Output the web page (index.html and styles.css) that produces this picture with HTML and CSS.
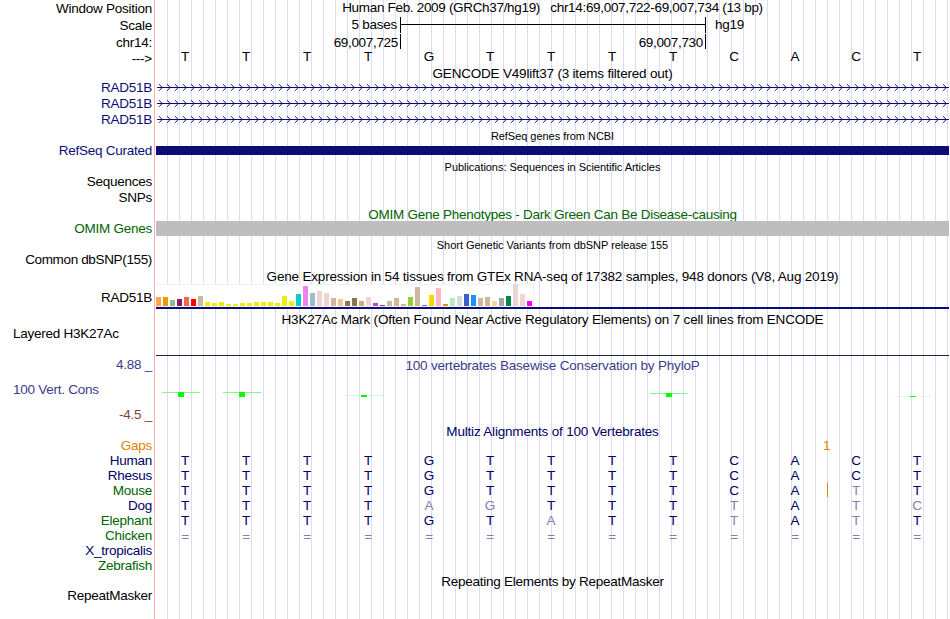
FILE: index.html
```html
<!DOCTYPE html>
<html lang="en">
<head>
    <meta charset="UTF-8">
    <meta name="viewport" content="width=device-width, initial-scale=1.0">
    <title>Genome Browser - RAD51B</title>
    <link rel="stylesheet" href="styles.css">
</head>
<body>
    <div class="browser">
        <section class="track ruler">
            <div class="labels">
                <div>Window Position</div>
                <div>Scale</div>
                <div>chr14:</div>
                <div class="strand">---&gt;</div>
            </div>
            <div class="data">
                <h2 class="t-position">Human Feb. 2009 (GRCh37/hg19) &nbsp; chr14:69,007,722-69,007,734 (13 bp)</h2>
                <div class="scale">
                    <span class="scale-size">5 bases</span>
                    <span class="scale-bar"></span>
                    <span class="scale-db">hg19</span>
                </div>
                <div class="ticks">
                    <span class="tick first">69,007,725</span>
                    <span class="tick">69,007,730</span>
                </div>
                <div class="bases" data-seq="TTTTGTTTTCACT"></div>
            </div>
        </section>

        <section class="track gencode">
            <div class="labels blue">
                <div>RAD51B</div>
                <div>RAD51B</div>
                <div>RAD51B</div>
            </div>
            <div class="data">
                <h2 class="wide">GENCODE V49lift37 (3 items filtered out)</h2>
                <svg class="introns" width="793" height="48">
                    <defs>
                        <pattern id="arrows" x="2" y="0" width="8" height="16" patternUnits="userSpaceOnUse">
                            <path d="M1 4.2 L4.3 7.5 L1 10.8" />
                        </pattern>
                    </defs>
                    <rect x="1" y="7" width="792" height="1" />
                    <rect x="1" y="23" width="792" height="1" />
                    <rect x="1" y="39" width="792" height="1" />
                    <rect x="1" y="0" width="792" height="48" fill="url(#arrows)" />
                </svg>
            </div>
        </section>

        <section class="track refseq">
            <div class="labels blue">
                <div>RefSeq Curated</div>
            </div>
            <div class="data">
                <h2 class="small">RefSeq genes from NCBI</h2>
                <div class="gene"></div>
            </div>
        </section>

        <section class="track pubs">
            <div class="labels">
                <div>Sequences</div>
                <div>SNPs</div>
            </div>
            <div class="data">
                <h2 class="small">Publications: Sequences in Scientific Articles</h2>
            </div>
        </section>

        <section class="track omim">
            <div class="labels">
                <div>OMIM Genes</div>
            </div>
            <div class="data">
                <h2>OMIM Gene Phenotypes - Dark Green Can Be Disease-causing</h2>
                <div class="gene"></div>
            </div>
        </section>

        <section class="track dbsnp">
            <div class="labels">
                <div>Common dbSNP(155)</div>
            </div>
            <div class="data">
                <h2 class="small">Short Genetic Variants from dbSNP release 155</h2>
            </div>
        </section>

        <section class="track gtex">
            <div class="labels">
                <div>RAD51B</div>
            </div>
            <div class="data">
                <h2 class="wide">Gene Expression in 54 tissues from GTEx RNA-seq of 17382 samples, 948 donors (V8, Aug 2019)</h2>
                <div class="chart" id="chart"></div>
                <div class="gene"></div>
            </div>
        </section>

        <section class="track h3k">
            <div class="labels">
                <div>Layered H3K27Ac</div>
            </div>
            <div class="data">
                <h2 class="wide">H3K27Ac Mark (Often Found Near Active Regulatory Elements) on 7 cell lines from ENCODE</h2>
                <div class="baseline"></div>
            </div>
        </section>

        <section class="track phylop">
            <div class="labels">
                <div class="max">4.88 _</div>
                <div class="name">100 Vert. Cons</div>
                <div class="min">-4.5 _</div>
            </div>
            <div class="data">
                <h2 class="wide">100 vertebrates Basewise Conservation by PhyloP</h2>
                <svg class="cons" width="793" height="10">
                    <g fill="#82f882">
                        <rect x="6" y="1" width="38" height="1" />
                        <rect x="67" y="1" width="38" height="1" />
                        <rect x="494" y="2" width="38" height="1" />
                    </g>
                    <g fill="#d0fad0">
                        <rect x="189" y="4" width="38" height="1" />
                        <rect x="738" y="5" width="38" height="1" opacity="0.6" />
                    </g>
                    <g fill="#00ff00">
                        <rect x="22" y="1" width="6" height="5" />
                        <rect x="83" y="1" width="6" height="5" />
                        <rect x="205" y="4" width="6" height="2" />
                        <rect x="510" y="2" width="6" height="4" />
                        <rect x="754" y="5" width="6" height="1" />
                    </g>
                </svg>
            </div>
        </section>

        <section class="track multiz">
            <div class="labels">
                <div class="gaps">Gaps</div>
                <div class="navy">Human</div>
                <div class="navy">Rhesus</div>
                <div class="green">Mouse</div>
                <div class="navy">Dog</div>
                <div class="green">Elephant</div>
                <div class="green">Chicken</div>
                <div class="navy">X_tropicalis</div>
                <div class="green">Zebrafish</div>
            </div>
            <div class="data">
                <h2 class="wide">Multiz Alignments of 100 Vertebrates</h2>
                <div class="gap-row">1</div>
                <!-- lower case = differs from human -->
                <div class="bases" data-seq="TTTTGTTTTCACT"></div>
                <div class="bases" data-seq="TTTTGTTTTCACT"></div>
                <div class="bases insert" data-seq="TTTTGTTTTCAtT"></div>
                <div class="bases" data-seq="TTTTagTTTtAtc"></div>
                <div class="bases" data-seq="TTTTGTaTTtAtT"></div>
                <div class="bases unaligned" data-seq="============="></div>
            </div>
        </section>

        <section class="track rmsk">
            <div class="labels">
                <div>RepeatMasker</div>
            </div>
            <div class="data">
                <h2>Repeating Elements by RepeatMasker</h2>
            </div>
        </section>
    </div>

    <script src="script.js"></script>
</body>
</html>
```
FILE: styles.css
```css
body {
    margin: 0;
    background-color: #fff;
    color: #000;
    font-family: "Liberation Sans", Arial, sans-serif;
    font-size: 13.5px;
    line-height: 15px;
    letter-spacing: -0.25px;
}

.browser {
    width: 949px;
    height: 619px;
    overflow: hidden;
    /* red edge of the label column, then a guide every 12px */
    background:
        linear-gradient(#ffb0b0, #ffb0b0) 154px 0 / 1px 100% no-repeat,
        repeating-linear-gradient(90deg, #dcdcf8 0, #dcdcf8 1px, transparent 1px, transparent 12px) 167px 0 / 782px 100% no-repeat;
}

.track {
    display: grid;
    grid-template-columns: 152px 793px;
    column-gap: 4px;
}

.labels {
    text-align: right;
    white-space: nowrap;
}

h2 {
    margin: 0;
    font-size: 13.5px;
    font-weight: normal;
    text-align: center;
    white-space: nowrap;
}

h2.wide {
    letter-spacing: -0.19px;
}

h2.small {
    font-size: 11px;
    line-height: 17px;
    height: 15px;
    letter-spacing: -0.04px;
}

h2.t-position {
    letter-spacing: -0.32px;
}

.blue {
    color: #0c0c78;
}

.navy {
    color: #000064;
}

.green {
    color: #006400;
}

/* rows of bases, one cell per position */
.bases {
    display: grid;
    grid-template-columns: repeat(13, 61px);
    height: 15px;
    text-align: center;
}

.bases span {
    padding-right: 3px;
}

/* ruler */
.ruler {
    height: 66px;
}

.ruler .labels {
    display: grid;
    grid-auto-rows: 17px;
    padding-top: 1px;
}

.ruler .strand {
    line-height: 13px;
}

.scale {
    display: flex;
    height: 16px;
    margin-top: 2px;
}

.scale-size {
    width: 241px;
    margin-right: 3px;
    text-align: right;
}

.scale-bar {
    box-sizing: border-box;
    width: 306px;
    border: solid #000;
    border-width: 0 1px;
    background: linear-gradient(#000, #000) 0 7px / 100% 1px no-repeat;
}

.scale-db {
    margin-left: 9px;
}

.ticks {
    display: flex;
    height: 15px;
    margin-top: 1px;
}

.tick {
    box-sizing: border-box;
    width: 305px;
    padding-right: 2px;
    border-right: 1px solid #000;
    text-align: right;
    line-height: 17px;
    letter-spacing: -0.32px;
}

.tick.first {
    width: 245px;
}

/* gencode */
.gencode {
    height: 62px;
}

.gencode .labels {
    padding-top: 14px;
    line-height: 16px;
}

.introns {
    display: block;
    margin-top: -1px;
    fill: #0c0c78;
}

.introns path {
    fill: none;
    stroke: #0c0c78;
    stroke-width: 1;
}

/* refseq */
.refseq {
    height: 31px;
}

.refseq .labels {
    padding-top: 15px;
}

.refseq .gene {
    height: 9px;
    margin-top: 3px;
    background-color: #0c0c78;
}

/* publications */
.pubs {
    height: 48px;
}

.pubs .labels {
    padding-top: 15px;
    line-height: 16px;
}

/* omim */
.omim {
    height: 30px;
    color: #006400;
}

.omim .labels {
    padding-top: 14px;
}

.omim h2 {
    height: 14px;
    overflow: hidden;
}

.omim .gene {
    height: 15px;
    background-color: #bebebe;
}

/* dbsnp */
.dbsnp {
    height: 32px;
}

.dbsnp .labels {
    padding-top: 15px;
    letter-spacing: -0.35px;
}

/* gtex */
.gtex {
    height: 43px;
}

.gtex .labels {
    padding-top: 21px;
}

.chart {
    display: flex;
    align-items: flex-end;
    gap: 2px;
    box-sizing: border-box;
    width: 378px;
    height: 23px;
    border: solid #f2f2f2;
    border-width: 1px 1px 1px 0;
    background-color: #fff;
}

.chart span {
    width: 5px;
}

.gtex .gene {
    height: 2px;
    background-color: #0c0c78;
}

/* h3k27ac */
.h3k {
    height: 46px;
}

.h3k .labels {
    padding: 14px 0 0 13px;
    text-align: left;
}

.h3k .baseline {
    height: 1px;
    margin-top: 28px;
    background-color: #202040;
}

/* phylop */
.phylop {
    height: 66px;
    color: #3c3c8c;
}

.phylop .labels {
    margin-top: -1px;
}

.phylop .name {
    padding: 10px 0 10px 13px;
    text-align: left;
}

.phylop .min {
    color: #8c3c3c;
}

.cons {
    display: block;
    margin-top: 18px;
}

/* multiz */
.multiz {
    height: 150px;
}

.multiz .labels {
    padding-top: 14px;
}

.multiz .data {
    color: #000064;
}

.multiz .bases .diff {
    color: #8080b0;
}

.multiz .unaligned {
    line-height: 17px;
}

.multiz .labels .gaps,
.gap-row {
    color: #e18200;
}

.gap-row {
    height: 14px;
    padding-left: 667px;
    line-height: 13px;
}

/* orange bar marks bases inserted between two columns */
.insert {
    background: linear-gradient(#e18200, #e18200) 671px 0 / 1px 14px no-repeat;
}

/* repeatmasker */
.rmsk {
    height: 45px;
}

.rmsk .labels {
    padding-top: 14px;
}
```
FILE: script.js
```js
// height and colour of every GTEx tissue
const tissues = [
    [9, '#ffa54f'], [9, '#ee9a00'], [6, '#8fbc8f'], [7, '#8b1c62'], [9, '#ee6a50'], [7, '#ff0000'],
    [10, '#cdb79e'], [4, '#eeee00'], [3, '#eeee00'], [4, '#eeee00'], [2, '#eeee00'], [2, '#eeee00'],
    [3, '#eeee00'], [3, '#eeee00'], [4, '#eeee00'], [4, '#eeee00'], [4, '#eeee00'], [3, '#eeee00'],
    [10, '#eeee00'], [5, '#eeee00'], [12, '#00cdcd'], [20, '#ee82ee'], [13, '#9ac0cd'], [15, '#eed5d2'],
    [13, '#eed5d2'], [8, '#cdb79e'], [7, '#eec591'], [5, '#8b7355'], [8, '#8b7355'], [5, '#cdaa7d'],
    [9, '#eed5d2'], [3, '#b452cd'], [1, '#7a378b'], [5, '#cdb79e'], [8, '#cdb79e'], [2, '#cdb79e'],
    [9, '#9acd32'], [19, '#cdb79e'], [1, '#7a67ee'], [11, '#ffd700'], [18, '#ffb6c1'], [2, '#cd9b1d'],
    [8, '#b4eeb4'], [10, '#d9d9d9'], [12, '#3a5fcd'], [11, '#1e90ff'], [8, '#cdb79e'], [9, '#cdb79e'],
    [5, '#ffd39b'], [8, '#a6a6a6'], [10, '#008b45'], [22, '#eed5d2'], [12, '#eed5d2'], [5, '#ff00ff']
];

const chart = document.getElementById('chart');
tissues.forEach(([height, color]) => {
    const bar = document.createElement('span');
    bar.style.height = height + 'px';
    bar.style.backgroundColor = color;
    chart.appendChild(bar);
});

document.querySelectorAll('.bases').forEach(row => {
    for (const base of row.dataset.seq) {
        const cell = document.createElement('span');
        cell.textContent = base.toUpperCase();
        if (base === '=' || base !== base.toUpperCase()) {
            cell.className = 'diff';
        }
        row.appendChild(cell);
    }
});
```
